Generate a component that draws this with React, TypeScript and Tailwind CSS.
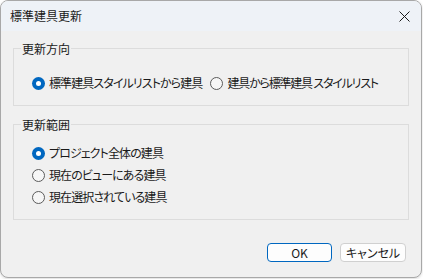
import React from "react";

const jp = "font-['Noto_Sans_CJK_JP',sans-serif] [font-feature-settings:'palt']";

const Radio = ({ checked, label, tight }: { checked?: boolean; label: string; tight?: boolean }) => (
  <label className="flex items-center gap-[4px] h-[22px] text-[12px] text-[#1a1a1a] leading-none whitespace-nowrap shrink-0">
    {checked ? (
      <span className="w-[13px] h-[13px] rounded-full bg-[#0067c0] flex items-center justify-center shrink-0">
        <span className="w-[5px] h-[5px] rounded-full bg-white" />
      </span>
    ) : (
      <span className="w-[13px] h-[13px] rounded-full border border-[#5b5b5b] bg-[#f6f6f6] shrink-0" />
    )}
    <span className={tight ? "tracking-[-1.2px]" : "tracking-[-0.9px]"}>{label}</span>
  </label>
);

const Group = ({ title, children, className }: { title: string; children: React.ReactNode; className?: string }) => (
  <fieldset className={`border border-[#dcdcdc] pl-[7px] ${className ?? ""}`}>
    <legend className="px-[1px] text-[12px] leading-[15px] text-[#1a1a1a]">{title}</legend>
    {children}
  </fieldset>
);

export default function App() {
  return (
    <div className={`w-[423px] h-[279px] bg-white ${jp}`}>
      <div className="w-[422px] h-[278px] rounded-[8px] border border-[#a8a8a8] bg-[#f0f0f0] overflow-hidden flex flex-col shadow-[0_1px_3px_rgba(0,0,0,0.15)]">
        <div className="h-[30px] bg-[#eef2f7] flex items-center justify-between pl-[9px] pr-[10px] shrink-0">
          <span className="text-[12px] text-[#1a1a1a]">標準建具更新</span>
          <svg width="11" height="11" viewBox="0 0 11 11" className="mr-[1px]">
            <path d="M0.5 0.5 L10.5 10.5 M10.5 0.5 L0.5 10.5" stroke="#1a1a1a" strokeWidth="1" />
          </svg>
        </div>
        <div className="flex-1 flex flex-col px-[12px] pt-[10px]">
          <Group title="更新方向" className="pt-[16px] pb-[11px]">
            <div className="flex items-center gap-[8px] ml-[11px]">
              <Radio checked label="標準建具スタイルリストから建具" />
              <Radio tight label="建具から標準建具 スタイルリスト" />
            </div>
          </Group>
          <Group title="更新範囲" className="mt-[11px] pt-[10px] pb-[11px]">
            <div className="flex flex-col ml-[11px]">
              <Radio checked label="プロジェクト全体の建具" />
              <Radio label="現在のビューにある建具" />
              <Radio label="現在選択されている建具" />
            </div>
          </Group>
          <div className="flex justify-end gap-[8px] mt-auto mb-[15px] pr-[3px]">
            <button className="w-[65px] h-[19px] rounded-[4px] border border-[#0067c0] bg-[#fdfdfd] text-[12px] leading-none text-[#1a1a1a]">
              OK
            </button>
            <button className="w-[66px] h-[19px] rounded-[4px] border border-[#d0d0d0] bg-[#fdfdfd] text-[12px] leading-none text-[#1a1a1a]">
              キャンセル
            </button>
          </div>
        </div>
      </div>
    </div>
  );
}
